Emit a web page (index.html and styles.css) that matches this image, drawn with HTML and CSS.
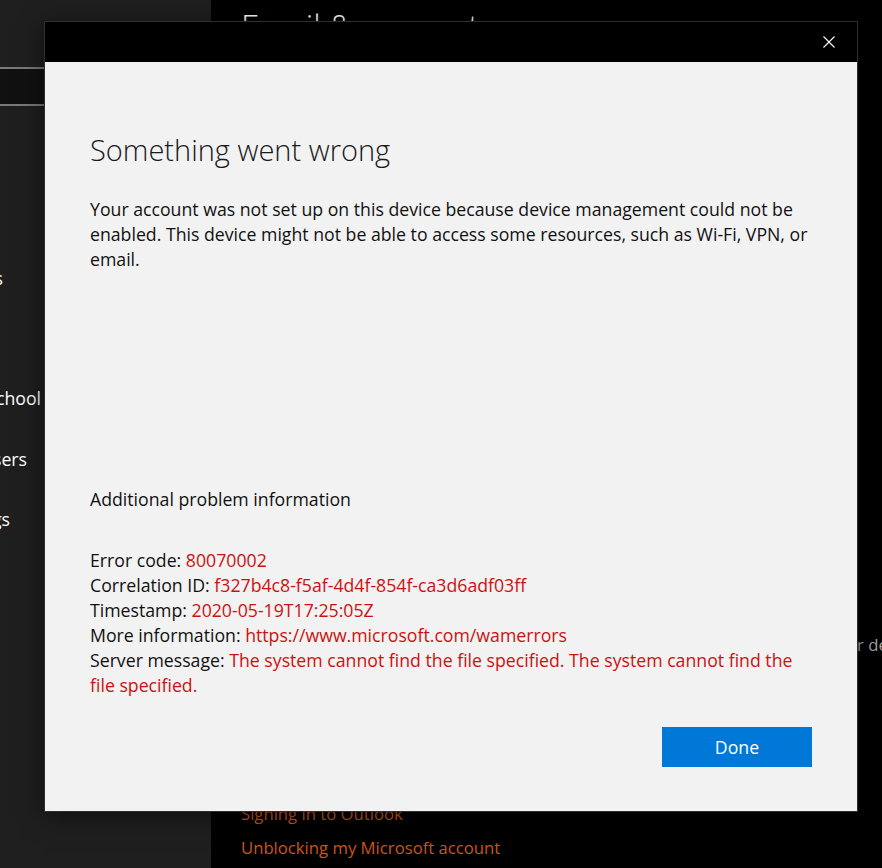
FILE: index.html
```html
<!DOCTYPE html>
<html lang="en">
<head>
<meta charset="utf-8">
<title>Email &amp; accounts</title>
<link rel="stylesheet" href="styles.css">
</head>
<body>
<div class="window">
  <aside class="sidebar">
    <div class="search"></div>
    <nav class="nav">
      <div class="nav-item item-email"><span>Email &amp; accounts</span></div>
      <div class="nav-item item-work"><span>Access work or school</span></div>
      <div class="nav-item item-family"><span>Family &amp; other users</span></div>
      <div class="nav-item item-sync"><span>Sync your settings</span></div>
    </nav>
  </aside>
  <main class="main">
    <h1 class="page-title">Email &amp; accounts</h1>
    <p class="side-note">or devices</p>
    <div class="links">
      <a class="link">Signing in to Outlook</a>
      <a class="link">Unblocking my Microsoft account</a>
    </div>
  </main>
</div>

<div class="dialog">
  <div class="titlebar">
    <button class="close" aria-label="Close">
      <svg width="12" height="12" viewBox="0 0 12 12"><path d="M0.5 0.5L11.5 11.5M11.5 0.5L0.5 11.5" stroke="#fff" stroke-width="1.1" fill="none"/></svg>
    </button>
  </div>
  <div class="content">
    <h2 class="heading">Something went wrong</h2>
    <p class="message">Your account was not set up on this device because device management could not be<br>enabled. This device might not be able to access some resources, such as Wi-Fi, VPN, or<br>email.</p>
    <p class="subheading">Additional problem information</p>
    <div class="details">
      <div>Error code: <span class="err">80070002</span></div>
      <div>Correlation ID: <span class="err">f327b4c8-f5af-4d4f-854f-ca3d6adf03ff</span></div>
      <div>Timestamp: <span class="err">2020-05-19T17:25:05Z</span></div>
      <div>More information: <span class="err">https://www.microsoft.com/wamerrors</span></div>
      <div>Server message: <span class="err">The system cannot find the file specified. The system cannot find the<br>file specified.</span></div>
    </div>
    <div class="actions">
      <button class="done">Done</button>
    </div>
  </div>
</div>
</body>
</html>
```
FILE: styles.css
```css
* { box-sizing: border-box; }
html, body {
  margin: 0;
  padding: 0;
  width: 882px;
  height: 868px;
  overflow: hidden;
  background: #000;
  font-family: "Open Sans", "Noto Sans", sans-serif;
}
.window {
  display: grid;
  grid-template-columns: 211px 1fr;
  height: 868px;
}
.sidebar {
  background: #1f1f1f;
  padding-top: 67px;
  overflow: hidden;
}
.search {
  margin-left: -20px;
  width: 200px;
  height: 39px;
  background: #111;
  border-top: 2px solid #7a7a7a;
  border-bottom: 2px solid #7a7a7a;
}
.nav {
  display: flex;
  flex-direction: column;
  color: #fff;
  font-size: 17.7px;
  line-height: 25px;
}
.nav-item {
  display: flex;
  justify-content: flex-end;
  white-space: nowrap;
  height: 25px;
}
.item-email { width: 3px; margin-top: 160px; }
.item-work { width: 41px; margin-top: 95px; }
.item-family { width: 27px; margin-top: 36px; }
.item-sync { width: 10px; margin-top: 35px; }

.main {
  padding-left: 30px;
  color: #fff;
  display: flex;
  flex-direction: column;
  overflow: hidden;
}
.page-title {
  margin: 0;
  padding-top: 7px;
  font-size: 33px;
  font-weight: 300;
  line-height: 40px;
  white-space: nowrap;
}
.side-note {
  margin: 585px 0 0 606px;
  font-size: 16.7px;
  line-height: 25px;
  color: #a6a6a6;
  white-space: nowrap;
}
.links {
  display: flex;
  flex-direction: column;
  margin-top: 144px;
  gap: 9px;
}
.link {
  color: #c9581a;
  font-size: 16.7px;
  line-height: 25px;
  white-space: nowrap;
}

.dialog {
  position: absolute;
  left: 44px;
  top: 21px;
  width: 814px;
  height: 791px;
  border: 1px solid #2e2e2e;
  background: #f2f2f2;
  box-shadow: 0 4px 24px rgba(0,0,0,0.55);
  display: flex;
  flex-direction: column;
}
.titlebar {
  height: 40px;
  background: #000;
  display: flex;
  justify-content: flex-end;
  align-items: stretch;
}
.close {
  width: 58px;
  border: 0;
  background: transparent;
  padding: 0;
  display: flex;
  align-items: center;
  justify-content: center;
}
.close svg { display: block; margin-left: 1px; }
.content {
  flex: 1;
  padding: 69px 45px 0 45px;
  color: #000;
  font-size: 17.7px;
  line-height: 25px;
  display: flex;
  flex-direction: column;
}
.heading {
  margin: 0;
  font-size: 29px;
  font-weight: 300;
  line-height: 38px;
  color: #1a1a1a;
}
.message {
  margin: 28px 0 0 0;
  white-space: nowrap;
  color: #111;
}
.subheading {
  margin: 215px 0 0 0;
  color: #111;
}
.details {
  margin-top: 36px;
  white-space: nowrap;
  color: #111;
}
.err { color: #cc1111; }
.actions {
  display: flex;
  justify-content: flex-end;
  margin-top: 29px;
}
.done {
  width: 150px;
  height: 40px;
  border: 0;
  background: #0078d7;
  color: #fff;
  font-family: "Open Sans", "Noto Sans", sans-serif;
  font-size: 17.7px;
  line-height: 40px;
  padding: 0;
}
```
